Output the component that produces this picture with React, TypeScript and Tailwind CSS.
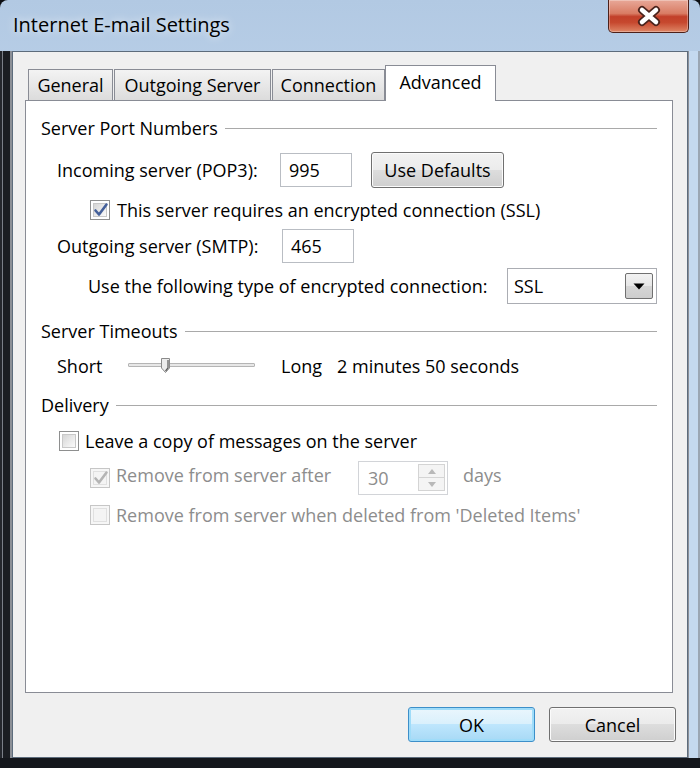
import React from 'react';

const CheckBox: React.FC<{ checked?: boolean; disabled?: boolean }> = ({ checked, disabled }) => (
  <span
    className={`flex h-[20px] w-[20px] shrink-0 items-center justify-center border ${
      disabled ? 'border-[#c6c6c6] bg-[#f6f6f6]' : 'border-[#8e8f8f] bg-white'
    }`}
  >
    <span
      className={`relative flex h-[14px] w-[14px] items-center justify-center border ${
        disabled ? 'border-[#e0e0e0] bg-[#f4f4f4]' : 'border-[#c8c8c8] bg-gradient-to-br from-[#d6d6d6] to-[#fbfbfb]'
      }`}
    >
      {checked && (
        <svg width="16" height="16" viewBox="0 0 16 16" className="absolute -top-[2px] left-[-1px]">
          <path
            d="M2.5 8.5 L6 12.5 L13.5 2.5"
            fill="none"
            stroke={disabled ? '#b4b4b4' : '#44609a'}
            strokeWidth="2.6"
            strokeLinecap="round"
            strokeLinejoin="round"
          />
        </svg>
      )}
    </span>
  </span>
);

const GroupHeader: React.FC<{ title: string }> = ({ title }) => (
  <div className="flex h-[24px] items-center">
    <span className="leading-none">{title}</span>
    <span className="ml-[7px] h-px flex-1 bg-[#a9a9a9]" />
  </div>
);

const TextBox: React.FC<{ value: string }> = ({ value }) => (
  <div className="flex h-[34px] w-[72px] items-center border border-[#b9bdc3] bg-white pl-[8px] leading-none">{value}</div>
);

const CloseButton: React.FC = () => (
  <div className="mr-[11px] flex h-[33px] w-[81px] items-center justify-center rounded-b-[5px] border border-t-0 border-[#4d2019] bg-[linear-gradient(180deg,#e8a898_0%,#d97c64_42%,#c2402a_52%,#c6482e_70%,#de8666_100%)] shadow-[inset_0_0_0_1px_rgba(255,255,255,0.3)]">
    <svg width="28" height="22" viewBox="0 0 28 22">
      <path d="M7 5 L21 17 M21 5 L7 17" stroke="#4a231c" strokeWidth="8" strokeLinecap="round" />
      <path d="M7 5 L21 17 M21 5 L7 17" stroke="#ffffff" strokeWidth="4.5" strokeLinecap="round" />
    </svg>
  </div>
);

const tabs = [
  { label: 'General', w: 'w-[85px]' },
  { label: 'Outgoing Server', w: 'w-[157px]' },
  { label: 'Connection', w: 'w-[113px]' },
];

export default function App() {
  return (
    <div className="h-[768px] w-[700px] overflow-hidden bg-[#0c0e12] font-['Open_Sans','Noto_Sans',sans-serif] text-[18px] text-black">
      <div className="flex h-full flex-col rounded-t-[8px] bg-[linear-gradient(180deg,#b2c9e3_0%,#c3d8ee_30%,#c0d6ed_85%,#6f8196_93%,#14171c_100%)]">
        {/* title bar */}
        <div className="flex h-[51px] shrink-0 items-start justify-between">
          <div className="pl-[13px] pt-[12px] text-[20px] leading-[26px] [text-shadow:0_0_8px_rgba(255,255,255,0.9)]">
            Internet E-mail Settings
          </div>
          <CloseButton />
        </div>

        <div className="flex flex-1">
          <div className="w-[12px] bg-[linear-gradient(90deg,#24272d_0,#24272d_2px,#7b8089_2px,#7b8089_3px,#1a1d22_3px,#1a1d22_10px,#8c9097_10px,#8c9097_12px)]" />

          {/* client area */}
          <div className="flex w-[676px] flex-col border border-[#5d6c7c] bg-[#f0f0f0]">
            <div className="pl-[12px] pr-[14px] pt-[13px]">
              {/* tabs */}
              <div className="flex h-[35px] items-end pl-[3px]">
                {tabs.map((t) => (
                  <div
                    key={t.label}
                    className={`mr-px flex h-[31px] items-center justify-center border border-b-0 border-[#898c95] bg-gradient-to-b from-[#f3f3f3] to-[#dcdcdc] leading-none ${t.w}`}
                  >
                    {t.label}
                  </div>
                ))}
                <div className="relative z-10 -mb-px -ml-px flex h-[36px] w-[111px] items-center justify-center border border-b-0 border-[#898c95] bg-white pb-[3px] leading-none">
                  Advanced
                </div>
              </div>

              {/* panel */}
              <div className="h-[593px] border border-[#898c95] bg-white px-[15px] pt-[15px]">
                <GroupHeader title="Server Port Numbers" />

                <div className="mt-[12px] flex h-[36px] items-center pl-[16px]">
                  <span className="w-[223px] leading-none">Incoming server (POP3):</span>
                  <TextBox value="995" />
                  <button className="ml-[19px] flex h-[36px] w-[133px] items-center justify-center rounded-[3px] border border-[#707070] bg-[linear-gradient(180deg,#f2f2f2_0%,#ebebeb_50%,#dddddd_50%,#cfcfcf_100%)] leading-none shadow-[inset_0_0_0_1px_#fbfbfb]">
                    Use Defaults
                  </button>
                </div>

                <div className="mt-[11px] flex h-[22px] items-center pl-[49px]">
                  <CheckBox checked />
                  <span className="ml-[7px] leading-none">This server requires an encrypted connection (SSL)</span>
                </div>

                <div className="mt-[8px] flex h-[34px] items-center pl-[16px]">
                  <span className="w-[225px] leading-none">Outgoing server (SMTP):</span>
                  <div className="w-[70px]">
                    <TextBox value="465" />
                  </div>
                </div>

                <div className="mt-[5px] flex h-[36px] items-center pl-[47px]">
                  <span className="leading-none">Use the following type of encrypted connection:</span>
                  <div className="ml-auto flex h-[36px] w-[150px] items-center border border-[#abadb3] bg-white pl-[6px] pr-[3px]">
                    <span className="leading-none">SSL</span>
                    <span className="ml-auto flex h-[26px] w-[28px] items-center justify-center rounded-[2px] border border-[#707070] bg-[linear-gradient(180deg,#f2f2f2_0%,#e6e6e6_50%,#d6d6d6_50%,#cdcdcd_100%)]">
                      <svg width="12" height="7" viewBox="0 0 12 7">
                        <path d="M0.5 0.5 H11.5 L6 6.5 Z" fill="#000" />
                      </svg>
                    </span>
                  </div>
                </div>

                <div className="mt-[15px]">
                  <GroupHeader title="Server Timeouts" />
                </div>

                <div className="mt-[11px] flex h-[24px] items-center pl-[16px]">
                  <span className="w-[71px] leading-none">Short</span>
                  <div className="relative h-[18px] w-[127px]">
                    <div className="mt-[6px] h-[4px] rounded-[1px] border border-[#b5b5b5] bg-[#e7e7e7]" />
                    <svg width="11" height="17" viewBox="0 0 11 17" className="absolute left-[32px] top-0">
                      <path d="M1.5 1.5 H9.5 V11 L5.5 15.5 L1.5 11 Z" fill="#ececec" stroke="#8a8a8a" strokeWidth="1" />
                      <path d="M8 3 V11 L5.5 14" fill="none" stroke="#5a5a5a" strokeWidth="1.2" />
                    </svg>
                  </div>
                  <span className="ml-[26px] w-[56px] leading-none">Long</span>
                  <span className="leading-none">2 minutes 50 seconds</span>
                </div>

                <div className="mt-[15px]">
                  <GroupHeader title="Delivery" />
                </div>

                <div className="mt-[13px] flex h-[22px] items-center pl-[18px]">
                  <CheckBox />
                  <span className="ml-[6px] leading-none">Leave a copy of messages on the server</span>
                </div>

                <div className="mt-[9px] flex h-[34px] items-center pl-[49px] text-[#8d8d8d]">
                  <CheckBox checked disabled />
                  <span className="ml-[6px] w-[242px] pb-[6px] leading-none">Remove from server after</span>
                  <div className="flex h-[34px] w-[90px] items-center border border-[#d2d4d8] bg-white pl-[9px] pr-[2px]">
                    <span className="leading-none">30</span>
                    <div className="ml-auto flex h-[28px] w-[27px] flex-col">
                      <span className="flex h-[14px] items-center justify-center border border-[#d4d4d4] bg-[#f4f4f4]">
                        <svg width="8" height="5" viewBox="0 0 8 5">
                          <path d="M0 5 L4 0 L8 5 Z" fill="#b8b8b8" />
                        </svg>
                      </span>
                      <span className="-mt-px flex h-[14px] items-center justify-center border border-[#d4d4d4] bg-[#f4f4f4]">
                        <svg width="8" height="5" viewBox="0 0 8 5">
                          <path d="M0 0 L8 0 L4 5 Z" fill="#b8b8b8" />
                        </svg>
                      </span>
                    </div>
                  </div>
                  <span className="ml-[15px] pb-[6px] leading-none">days</span>
                </div>

                <div className="mt-[9px] flex h-[22px] items-center pl-[49px] text-[#8d8d8d]">
                  <CheckBox disabled />
                  <span className="ml-[6px] leading-none">Remove from server when deleted from 'Deleted Items'</span>
                </div>
              </div>
            </div>

            {/* buttons */}
            <div className="mt-[14px] flex justify-end gap-[14px] pr-[11px]">
              <button className="flex h-[35px] w-[127px] items-center justify-center rounded-[3px] border border-[#3c8fc9] bg-[linear-gradient(180deg,#eaf6fd_0%,#d9f0fc_50%,#bee6fd_50%,#a7d9f5_100%)] leading-none shadow-[inset_0_0_0_2px_#9fdcf9]">
                OK
              </button>
              <button className="flex h-[35px] w-[127px] items-center justify-center rounded-[3px] border border-[#707070] bg-[linear-gradient(180deg,#f2f2f2_0%,#ebebeb_50%,#dddddd_50%,#cfcfcf_100%)] leading-none shadow-[inset_0_0_0_1px_#fbfbfb]">
                Cancel
              </button>
            </div>
          </div>

          <div className="w-[12px] bg-[linear-gradient(90deg,#8c9097_0,#8c9097_1px,#c4d9ef_1px,#c4d9ef_10px,#9aa6b3_10px)]" />
        </div>
        <div className="h-[10px] bg-[#14171c]" />
      </div>
    </div>
  );
}
